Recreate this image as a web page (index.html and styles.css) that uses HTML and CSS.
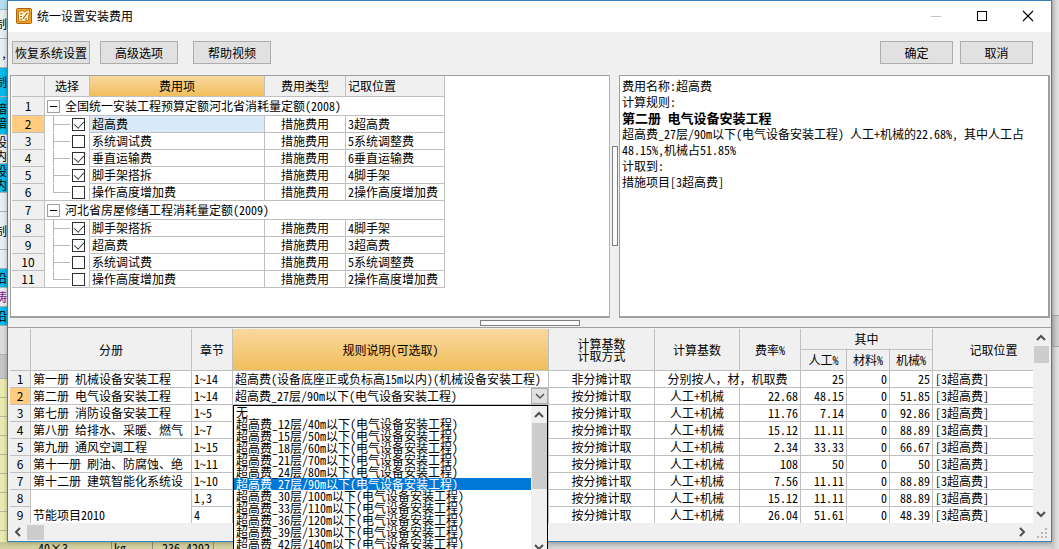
FILE: index.html
```html
<!DOCTYPE html>
<html lang="zh-CN">
<head>
<meta charset="utf-8">
<title>统一设置安装费用</title>
<link rel="stylesheet" href="styles.css">
</head>
<body>
<div class="backdrop" aria-hidden="true">
  <div class="strip">
    <div class="s-top"></div>
    <div class="s-pale s-30">制</div>
    <div class="s-pale s-30">,</div>
    <div class="s-cyan s-30">制</div>
    <div class="s-cyan s-47">暗<br>暗</div>
    <div class="s-pale s-30">设<br>内</div>
    <div class="s-cyan s-30">设<br>内</div>
    <div class="s-pale s-19"></div>
    <div class="s-pale s-38">制</div>
    <div class="s-pale s-19"></div>
    <div class="s-cyan s-19">沿</div>
    <div class="s-pale s-19 s-purple">铸</div>
    <div class="s-cyan s-19">沿</div>
    <div class="s-gray s-30"></div>
    <div class="s-gray s-dark"></div>
    <div class="s-yellow"></div>
  </div>
  <div class="under">
    <span class="u-a">-40×3</span><span class="u-b">kg</span><span class="u-c">236.4292</span><span class="u-d"></span>
  </div>
  <div class="side"><div class="side-bar"></div></div>
</div>

<main class="dialog">
  <header class="titlebar">
    <svg class="logo" width="16" height="16" viewBox="0 0 16 16">
      <rect x=".5" y=".5" width="15" height="15" rx="1" fill="#f0a020" stroke="#a86408"/>
      <path d="M2.500 3.500L7 2.500L8 4L13.500 1.500L12.500 12L8 13.500L2.500 13Z" fill="#fff3cc" stroke="#c07a10"/>
      <path d="M4 6l2.500-.5M4 8.500h2M4 11l2 .5M7 11l4.500-6.500M9 11.500l2-1" stroke="#b06008" stroke-width="1.200" fill="none"/>
    </svg>
    <h1>统一设置安装费用</h1>
    <div class="winbtns">
      <button aria-label="最小化"><svg width="12" height="12"><path d="M1 6.500h10" stroke="#c4c4c4"/></svg></button>
      <button aria-label="最大化"><svg width="12" height="12"><rect x="1.500" y="1.500" width="9" height="9" fill="none" stroke="#000"/></svg></button>
      <button aria-label="关闭"><svg width="12" height="12"><path d="M1 1l10 10M11 1L1 11" stroke="#000" stroke-width="1.100"/></svg></button>
    </div>
  </header>

  <div class="toolbar">
    <button class="btn">恢复系统设置</button>
    <button class="btn">高级选项</button>
    <button class="btn b-help">帮助视频</button>
    <button class="btn b-ok">确定</button>
    <button class="btn b-cancel">取消</button>
  </div>

  <div class="upper">
    <section class="pane fees">
      <table class="grid fee-table">
        <colgroup><col class="f1"><col class="f2"><col class="f3"><col class="f4"><col class="f5"></colgroup>
        <thead><tr><th></th><th>选择</th><th class="hot">费用项</th><th>费用类型</th><th class="l">记取位置</th></tr></thead>
        <tbody>
          <tr class="group"><th>1</th><td colspan="4"><div class="node"><button class="fold" aria-label="折叠"></button>全国统一安装工程预算定额河北省消耗量定额(2008)</div></td></tr>
          <tr><th class="cur">2</th><td class="tree"><div class="leaf"><i></i><input type="checkbox" aria-label="超高费" checked></div></td><td class="sel">超高费</td><td class="c">措施费用</td><td>3超高费</td></tr>
          <tr><th>3</th><td class="tree"><div class="leaf"><i></i><input type="checkbox" aria-label="系统调试费"></div></td><td>系统调试费</td><td class="c">措施费用</td><td>5系统调整费</td></tr>
          <tr><th>4</th><td class="tree"><div class="leaf"><i></i><input type="checkbox" aria-label="垂直运输费" checked></div></td><td>垂直运输费</td><td class="c">措施费用</td><td>6垂直运输费</td></tr>
          <tr><th>5</th><td class="tree"><div class="leaf"><i></i><input type="checkbox" aria-label="脚手架搭拆" checked></div></td><td>脚手架搭拆</td><td class="c">措施费用</td><td>4脚手架</td></tr>
          <tr><th>6</th><td class="tree end"><div class="leaf"><i></i><input type="checkbox" aria-label="操作高度增加费"></div></td><td>操作高度增加费</td><td class="c">措施费用</td><td>2操作高度增加费</td></tr>
          <tr class="group"><th>7</th><td colspan="4"><div class="node"><button class="fold" aria-label="折叠"></button>河北省房屋修缮工程消耗量定额(2009)</div></td></tr>
          <tr><th>8</th><td class="tree"><div class="leaf"><i></i><input type="checkbox" aria-label="脚手架搭拆" checked></div></td><td>脚手架搭拆</td><td class="c">措施费用</td><td>4脚手架</td></tr>
          <tr><th>9</th><td class="tree"><div class="leaf"><i></i><input type="checkbox" aria-label="超高费" checked></div></td><td>超高费</td><td class="c">措施费用</td><td>3超高费</td></tr>
          <tr><th>10</th><td class="tree"><div class="leaf"><i></i><input type="checkbox" aria-label="系统调试费"></div></td><td>系统调试费</td><td class="c">措施费用</td><td>5系统调整费</td></tr>
          <tr><th>11</th><td class="tree end"><div class="leaf"><i></i><input type="checkbox" aria-label="操作高度增加费"></div></td><td>操作高度增加费</td><td class="c">措施费用</td><td>2操作高度增加费</td></tr>
        </tbody>
      </table>
    </section>
    <div class="vsplit"><div class="vgrip"></div></div>
    <section class="pane info">
      <p>费用名称:超高费</p>
      <p>计算规则:</p>
      <p><b>第二册 电气设备安装工程</b></p>
      <p>超高费_27层/90m以下(电气设备安装工程) 人工+机械的22.68%, 其中人工占<br>48.15%,机械占51.85%</p>
      <p>计取到:</p>
      <p>措施项目[3超高费]</p>
    </section>
  </div>

  <div class="hsplit"><div class="hgrip"></div></div>

  <section class="lower">
    <div class="view">
      <div class="clip">
      <table class="grid rule-table">
        <colgroup><col class="r1"><col class="r2"><col class="r3"><col class="r4"><col class="r5"><col class="r6"><col class="r7"><col class="r8"><col class="r9"><col class="r9"><col class="r11"></colgroup>
        <thead>
          <tr><th rowspan="2"></th><th rowspan="2">分册</th><th rowspan="2">章节</th><th rowspan="2" class="hot">规则说明(可选取)</th><th rowspan="2" class="two">计算基数<br>计取方式</th><th rowspan="2">计算基数</th><th rowspan="2">费率%</th><th colspan="3">其中</th><th rowspan="2">记取位置</th></tr>
          <tr><th>人工%</th><th>材料%</th><th>机械%</th></tr>
        </thead>
        <tbody>
          <tr><th>1</th><td>第一册 机械设备安装工程</td><td>1~14</td><td>超高费(设备底座正或负标高15m以内)(机械设备安装工程)</td><td class="c">非分摊计取</td><td class="c full" colspan="2">分别按人，材，机取费</td><td class="n">25</td><td class="n">0</td><td class="n">25</td><td>[3超高费]</td></tr>
          <tr><th class="cur">2</th><td>第二册 电气设备安装工程</td><td>1~14</td><td class="pick"><div class="combo"><select aria-label="规则说明"><option>超高费_27层/90m以下(电气设备安装工程)</option></select><span class="arrow"><svg width="12" height="8"><path d="M2 2l4 4l4-4" fill="none" stroke="#555" stroke-width="1.500"/></svg></span></div></td><td class="c">按分摊计取</td><td class="c">人工+机械</td><td class="n">22.68</td><td class="n">48.15</td><td class="n">0</td><td class="n">51.85</td><td>[3超高费]</td></tr>
          <tr><th>3</th><td>第七册 消防设备安装工程</td><td>1~5</td><td></td><td class="c">按分摊计取</td><td class="c">人工+机械</td><td class="n">11.76</td><td class="n">7.14</td><td class="n">0</td><td class="n">92.86</td><td>[3超高费]</td></tr>
          <tr><th>4</th><td>第八册 给排水、采暖、燃气</td><td>1~7</td><td></td><td class="c">按分摊计取</td><td class="c">人工+机械</td><td class="n">15.12</td><td class="n">11.11</td><td class="n">0</td><td class="n">88.89</td><td>[3超高费]</td></tr>
          <tr><th>5</th><td>第九册 通风空调工程</td><td>1~15</td><td></td><td class="c">按分摊计取</td><td class="c">人工+机械</td><td class="n">2.34</td><td class="n">33.33</td><td class="n">0</td><td class="n">66.67</td><td>[3超高费]</td></tr>
          <tr><th>6</th><td>第十一册 刷油、防腐蚀、绝</td><td>1~11</td><td></td><td class="c">按分摊计取</td><td class="c">人工+机械</td><td class="n">108</td><td class="n">50</td><td class="n">0</td><td class="n">50</td><td>[3超高费]</td></tr>
          <tr><th>7</th><td>第十二册 建筑智能化系统设</td><td>1~10</td><td></td><td class="c">按分摊计取</td><td class="c">人工+机械</td><td class="n">7.56</td><td class="n">11.11</td><td class="n">0</td><td class="n">88.89</td><td>[3超高费]</td></tr>
          <tr><th>8</th><td rowspan="2" class="low">节能项目2010</td><td>1,3</td><td></td><td class="c">按分摊计取</td><td class="c">人工+机械</td><td class="n">15.12</td><td class="n">11.11</td><td class="n">0</td><td class="n">88.89</td><td>[3超高费]</td></tr>
          <tr><th>9</th><td>4</td><td></td><td class="c">按分摊计取</td><td class="c">人工+机械</td><td class="n">26.04</td><td class="n">51.61</td><td class="n">0</td><td class="n">48.39</td><td>[3超高费]</td></tr>
        </tbody>
      </table>
      </div>
      <div class="vbar">
        <svg width="12" height="8"><path d="M2 6l4-4l4 4" fill="none" stroke="#505050" stroke-width="2"/></svg>
        <div class="vthumb"></div>
        <svg width="12" height="8"><path d="M2 2l4 4l4-4" fill="none" stroke="#505050" stroke-width="2"/></svg>
      </div>
    </div>
    <div class="hbar">
      <svg width="8" height="12"><path d="M6 2L2 6l4 4" fill="none" stroke="#505050" stroke-width="2"/></svg>
      <div class="hthumb"></div>
      <svg class="right" width="8" height="12"><path d="M2 2l4 4l-4 4" fill="none" stroke="#505050" stroke-width="2"/></svg>
      <svg class="size" width="11" height="11"><path d="M8 1h2v2h-2zM4 5h2v2h-2zM8 5h2v2h-2zM0 9h2v2h-2zM4 9h2v2h-2zM8 9h2v2h-2z" fill="#b8b8b8"/></svg>
    </div>
    <div class="droplist">
      <ul role="listbox" aria-label="规则说明">
        <li role="option">无</li>
        <li role="option">超高费_12层/40m以下(电气设备安装工程)</li>
        <li role="option">超高费_15层/50m以下(电气设备安装工程)</li>
        <li role="option">超高费_18层/60m以下(电气设备安装工程)</li>
        <li role="option">超高费_21层/70m以下(电气设备安装工程)</li>
        <li role="option">超高费_24层/80m以下(电气设备安装工程)</li>
        <li role="option" class="on" aria-selected="true">超高费_27层/90m以下(电气设备安装工程)</li>
        <li role="option">超高费_30层/100m以下(电气设备安装工程)</li>
        <li role="option">超高费_33层/110m以下(电气设备安装工程)</li>
        <li role="option">超高费_36层/120m以下(电气设备安装工程)</li>
        <li role="option">超高费_39层/130m以下(电气设备安装工程)</li>
        <li role="option">超高费_42层/140m以下(电气设备安装工程)</li>
      </ul>
      <div class="vbar">
        <svg width="12" height="8"><path d="M2 6l4-4l4 4" fill="none" stroke="#505050" stroke-width="2"/></svg>
        <div class="vthumb long"></div>
        <svg width="12" height="8"><path d="M2 2l4 4l4-4" fill="none" stroke="#505050" stroke-width="2"/></svg>
      </div>
    </div>
  </section>
</main>
</body>
</html>
```
FILE: styles.css
```css
* { box-sizing: border-box; }
html, body { height: 100%; }
body {
  margin: 0;
  position: relative;
  overflow: hidden;
  background: #e4e4e4;
  color: #000;
  font: 12px/16px "Noto Sans CJK SC", sans-serif;
  font-feature-settings: "hwid";
}
button, input, select { font: inherit; color: inherit; font-feature-settings: inherit; margin: 0; padding: 0; }
h1, p, ul { margin: 0; padding: 0; }
svg { display: block; }

/* application behind the dialog */
.backdrop { position: absolute; inset: 0; }
.strip { width: 7px; height: 100%; display: flex; flex-direction: column; }
.strip > div {
  flex: none;
  overflow: hidden;
  display: flex;
  flex-wrap: wrap;
  align-content: center;
  justify-content: flex-end;
  line-height: 14px;
  border-bottom: 1px solid #a8b4b8;
}
.s-top { height: 10px; background: #b4e0f2; }
.strip .s-30 { height: 29px; }
.strip .s-19 { height: 19px; }
.strip .s-38 { height: 38px; }
.strip .s-47 { height: 38px; }
.s-pale { background: #e6eef2; }
.s-cyan { background: #06b8e8; }
.s-gray { background: #dcdcdc; }
.s-dark { height: 24px; background: #c4c4c4; }
.s-purple { color: #80108c; }
.strip .s-yellow {
  flex: 1;
  background: repeating-linear-gradient(#e9e9b0 0 18px, #b8b89a 18px 19px);
}
.under {
  position: absolute;
  inset: auto 0 0 0;
  height: 7px;
  overflow: hidden;
  display: flex;
  line-height: 12px;
  background: linear-gradient(#bcbcbc, #d8d8d8);
}
.under span { background: linear-gradient(#c6c494, #dedcaa); border-right: 1px solid #8c8c78; height: 12px; }
.u-a { width: 112px; padding-left: 32px; }
.u-b { width: 41px; padding-left: 2px; }
.u-c { width: 61px; padding-left: 9px; }
.u-d { width: 20px; }
.side {
  position: absolute;
  inset: 0 0 0 auto;
  width: 7px;
  padding-top: 315px;
  background: linear-gradient(90deg, #c6c6c6, #e6e6e6);
}
.side-bar { height: 32px; background: rgb(0 0 0 / 8%); border: solid #a8a8a8; border-width: 1px 0; }

/* dialog window */
.dialog {
  position: absolute;
  inset: 0 7px 7px 7px;
  display: flex;
  flex-direction: column;
  background: #f0f0f0;
  border: 1px solid #3585c6;
  box-shadow: 0 0 4px rgb(0 0 0 / 30%);
}
.titlebar { flex: none; height: 31px; display: flex; align-items: center; background: #fff; padding: 0 17px 2px 8px; }
.titlebar h1 { font-size: 12px; font-weight: 400; margin-left: 5px; }
.winbtns { margin-left: auto; display: flex; gap: 34px; }
.winbtns button { border: 0; background: none; width: 12px; height: 12px; }

.toolbar { flex: none; height: 42px; display: flex; align-items: flex-start; gap: 10px; padding: 9px 18px 0 4px; }
.btn { width: 78px; height: 23px; background: #e1e1e1; border: 1px solid #adadad; line-height: 16px; white-space: nowrap; }
.b-help { margin-left: 5px; }
.b-ok { margin-left: auto; }
.b-ok, .b-cancel { width: 73px; }
.b-cancel { margin-left: -3px; }

.upper { flex: 245 1 0; min-height: 0; display: flex; padding: 1px 1px 0 2px; }
.pane { background: #fff; border: 1px solid #a0a0a0; border-bottom-width: 2px; min-width: 0; overflow: hidden; }
.fees { flex: 600 1 600px; padding-left: 1px; border-right-color: #b4b4b4; }
.info { flex: 431 1 431px; padding: 2px; border-right-width: 2px; }
.info p { white-space: nowrap; }
.info b { font-size: 13px; }
.vsplit { flex: none; width: 9px; display: flex; justify-content: center; padding-top: 71px; }
.vgrip { width: 6px; height: 100px; border: 1px solid #808080; background: #fafafa; }
.hsplit { flex: none; height: 9px; display: flex; justify-content: center; align-items: center; }
.hgrip { width: 100px; height: 6px; border: 1px solid #808080; background: #fafafa; }

/* tables */
.grid { table-layout: fixed; border-collapse: separate; border-spacing: 0; }
.grid th, .grid td { padding: 0; border: solid #c0c0c0; border-width: 0 1px 1px 0; white-space: nowrap; overflow: hidden; }
.grid th { background: #f0f0f0; font-weight: 400; text-align: center; }
.grid td { background: #fff; padding-left: 2px; }
.grid tbody tr { height: 17px; }
.grid tbody th, .grid .full { font-feature-settings: normal; }
.grid .hot { background: linear-gradient(#f9d89e, #f0be5c); }
.grid .cur { background: #ffcc80; }
.grid .c { text-align: center; padding: 0; }
.grid .n { text-align: right; padding: 0 2px 0 0; }
.grid .l { text-align: left; padding-left: 2px; }
.grid .sel { background: #d8e9f9; }

.fee-table { width: 433px; }
.fee-table thead tr { height: 21px; }
.fee-table .group { height: 19px; }
.f1 { width: 33px; } .f2 { width: 45px; } .f3 { width: 175px; } .f4 { width: 81px; } .f5 { width: 99px; }
.node { display: flex; align-items: center; gap: 5px; }
.fold {
  width: 13px; height: 13px; border: 1px solid #a0a0a0;
  background: linear-gradient(#000, #000) center / 7px 1px no-repeat #fff;
}
.grid .tree { padding: 0; border-bottom-color: #fff; }
.grid .end { border-bottom-color: #c0c0c0; }
.leaf { height: 17px; margin-bottom: -1px; padding-left: 8px; display: flex; align-items: center; gap: 2px; }
.leaf i {
  align-self: stretch; width: 17px;
  background:
    linear-gradient(#b8b8b8, #b8b8b8) left / 1px 100% no-repeat,
    linear-gradient(#b8b8b8, #b8b8b8) center / 100% 1px no-repeat;
}
.end .leaf i {
  background:
    linear-gradient(#b8b8b8, #b8b8b8) left top / 1px 50% no-repeat,
    linear-gradient(#b8b8b8, #b8b8b8) center / 100% 1px no-repeat;
}
.leaf input { appearance: none; width: 13px; height: 13px; border: 1px solid #303030; background: #fff; display: flex; justify-content: center; }
.leaf input:checked::after { content: ""; width: 5px; height: 8px; border: solid #404040; border-width: 0 1px 1px 0; transform: rotate(42deg); }

.lower { flex: 213 1 0; min-height: 0; position: relative; display: flex; flex-direction: column; border-top: 1px solid #a0a0a0; padding: 1px 2px 0; }
.view { flex: 1; min-height: 0; display: flex; }
.clip { flex: 1; min-width: 0; overflow: hidden; }
.rule-table { width: 1044px; }
.rule-table thead tr { height: 21px; }
.rule-table .two { line-height: 12px; }
.rule-table .low { vertical-align: bottom; }
.r1 { width: 21px; } .r2 { width: 161px; } .r3 { width: 41px; } .r4 { width: 316px; } .r5 { width: 106px; }
.r6 { width: 85px; } .r7 { width: 61px; } .r8 { width: 46px; } .r9 { width: 43px; } .r11 { width: 122px; }
.grid .pick { padding: 0; }
.combo { display: flex; height: 16px; }
.combo select { flex: 1; appearance: none; border: 0; border-radius: 0; background: none; padding-left: 2px; height: 16px; line-height: 16px; }
.arrow { width: 17px; display: flex; align-items: center; justify-content: center; background: #e1e1e1; border: 1px solid #adadad; pointer-events: none; }

.vbar { flex: none; width: 16px; background: #f0f0f0; display: flex; flex-direction: column; align-items: center; padding: 5px 0; }
.vbar svg:last-child { margin-top: auto; }
.vthumb { width: 15px; height: 17px; margin-top: 4px; background: #cdcdcd; }
.vthumb.long { height: 66px; }
.hbar { flex: none; height: 18px; display: flex; align-items: center; padding: 0 1px 0 4px; gap: 5px; }
.hthumb { width: 17px; height: 15px; background: #cdcdcd; }
.hbar .right { margin-left: auto; }
.size { margin-left: 6px; }

/* open list of rules, lies over the table and the window edge */
.droplist {
  position: absolute;
  left: 225px;
  top: 77px;
  width: 315px;
  height: 152px;
  display: flex;
  border: 1px solid #000;
  background: #fff;
}
.droplist ul { flex: 1; list-style: none; overflow: hidden; }
.droplist li { height: 12px; line-height: 12px; padding-left: 2px; white-space: nowrap; }
.droplist .on { background: #0078d7; color: #fff; }
```
